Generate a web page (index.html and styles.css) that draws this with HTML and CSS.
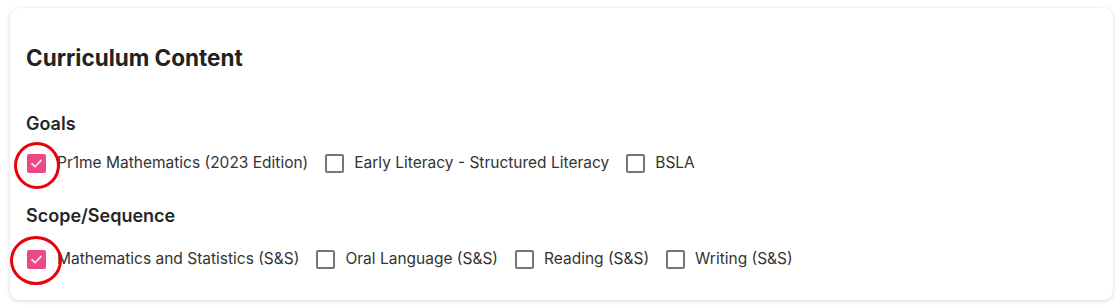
FILE: index.html
```html
<!DOCTYPE html>
<html lang="en">
<head>
<meta charset="utf-8">
<title>Curriculum Content</title>
<link rel="stylesheet" href="styles.css">
</head>
<body>
<div class="card">
  <h2 class="title">Curriculum Content</h2>
  <section class="group">
    <h3 class="group-title">Goals</h3>
    <div class="options">
      <label class="option">
        <span class="box checked"><svg viewBox="0 0 20 20" width="19" height="19"><path d="M5.2 10.2l3.2 3.2 6.4-6.6" fill="none" stroke="#fde6ee" stroke-width="1.8" stroke-linecap="round" stroke-linejoin="round"/></svg></span>
        <span class="ring ring-a"></span>
        <span class="text">Pr1me Mathematics (2023 Edition)</span>
      </label>
      <label class="option">
        <span class="box"></span>
        <span class="text">Early Literacy - Structured Literacy</span>
      </label>
      <label class="option">
        <span class="box"></span>
        <span class="text">BSLA</span>
      </label>
    </div>
  </section>
  <section class="group">
    <h3 class="group-title">Scope/Sequence</h3>
    <div class="options">
      <label class="option">
        <span class="box checked"><svg viewBox="0 0 20 20" width="19" height="19"><path d="M5.2 10.2l3.2 3.2 6.4-6.6" fill="none" stroke="#fde6ee" stroke-width="1.8" stroke-linecap="round" stroke-linejoin="round"/></svg></span>
        <span class="ring ring-b"></span>
        <span class="text">Mathematics and Statistics (S&amp;S)</span>
      </label>
      <label class="option">
        <span class="box"></span>
        <span class="text">Oral Language (S&amp;S)</span>
      </label>
      <label class="option">
        <span class="box"></span>
        <span class="text">Reading (S&amp;S)</span>
      </label>
      <label class="option">
        <span class="box"></span>
        <span class="text">Writing (S&amp;S)</span>
      </label>
    </div>
  </section>
</div>
</body>
</html>
```

FILE: styles.css
```css
html, body {
  margin: 0;
  padding: 0;
  background: #ffffff;
}
body {
  font-family: Inter, "Noto Sans", "Liberation Sans", sans-serif;
  color: #262626;
  padding: 8px 5px 7px 10px;
}
.card {
  box-sizing: border-box;
  height: 292px;
  background: #ffffff;
  border-radius: 9px;
  box-shadow: 0 1px 4px rgba(0, 0, 0, 0.16), 0 0 1px rgba(0, 0, 0, 0.06);
  padding: 36px 16px 0 16px;
}
.title {
  margin: 0;
  font-size: 22.5px;
  line-height: 28px;
  font-weight: 700;
  color: #222222;
}
.group {
  margin-top: 41px;
}
.group + .group {
  margin-top: 32px;
}
.group-title {
  margin: 0;
  font-size: 18px;
  line-height: 22px;
  font-weight: 600;
  color: #262626;
}
.options {
  display: flex;
  align-items: center;
  gap: 16px;
  margin-top: 18px;
}
.group + .group .options {
  margin-top: 22px;
}
.option {
  position: relative;
  display: flex;
  align-items: center;
  gap: 10px;
  font-size: 15.5px;
  line-height: 20px;
  color: #333333;
}
.box {
  box-sizing: border-box;
  width: 19px;
  height: 19px;
  border: 2px solid #767676;
  border-radius: 2px;
  display: flex;
  align-items: center;
  justify-content: center;
  margin-left: 1px;
}
.box.checked {
  border: none;
  background: #ec4a85;
  margin-right: 1px;
}
.box svg {
  display: block;
}
.ring {
  position: absolute;
  border: 3px solid #e8000b;
  border-radius: 50%;
  box-sizing: border-box;
  pointer-events: none;
}
.ring-a {
  left: -12px;
  top: -11px;
  width: 46px;
  height: 47px;
}
.ring-b {
  left: -16px;
  top: -13px;
  width: 52px;
  height: 49px;
}
```
